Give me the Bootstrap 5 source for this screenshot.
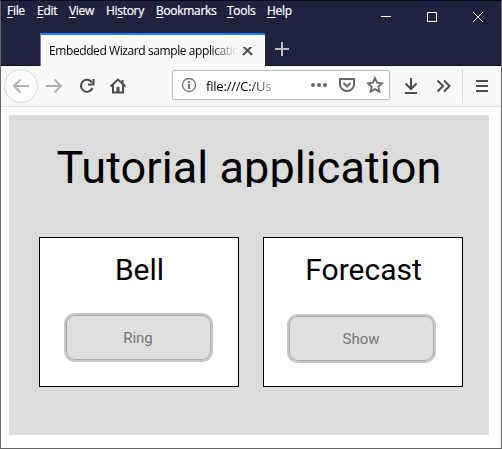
<!DOCTYPE html>
<html lang="en">
<head>
<meta charset="utf-8">
<title>Embedded Wizard sample application</title>
<link href="https://cdn.jsdelivr.net/npm/bootstrap@5.3.0/dist/css/bootstrap.min.css" rel="stylesheet">
<style>
body{font-family:"Open Sans","Noto Sans",sans-serif;font-size:12px;line-height:16px;color:#000}
.window{width:502px;height:449px;border:1px solid #666;border-top-color:#0a0b18;background:#fff}
.titlebar{height:65px;background:#202340;border-bottom:1px solid #100f28}
.menus{height:32px;padding:2px 0 0 6px;color:#fff}
.menus span{font-size:12px;white-space:nowrap;letter-spacing:-.3px;-webkit-text-stroke:.2px #fff}
.menus u{text-underline-offset:2px}
.w30{width:30px}.w32{width:32px}.w37{width:37px}.w50{width:50px}.w71{width:71px}.w40{width:40px}
.controls{margin-left:84px;margin-top:8px}
.tab-active{width:225px;height:33px;margin-left:39px;background:#f9f9fa;border-top:2px solid #0a84ff;padding:8px 0 0 8px;border-left:1px solid #777b9a}
.tab-text{width:189px;white-space:nowrap;font-size:12px;letter-spacing:-.41px;-webkit-mask-image:linear-gradient(90deg,#000 162px,transparent 189px);mask-image:linear-gradient(90deg,#000 162px,transparent 189px)}
.toolbar{height:41px;background:#f9f9fa;border-bottom:1px solid #ddd}
.address{width:218px;height:30px;margin-left:44px;background:#fff;border:1px solid #bbb;border-radius:2px;box-shadow:0 1px 3px #0001}
.url{width:69px;padding:2px 0 0 1px;white-space:nowrap;font-size:13px;letter-spacing:-.2px;-webkit-mask-image:linear-gradient(90deg,#000 46px,transparent 78px);mask-image:linear-gradient(90deg,#000 46px,transparent 78px)}
svg{display:block;flex:none;fill:none;stroke:#4c4c4c;stroke-width:2}
.stage{width:480px;height:320px;margin:8px 0 0 8px;background:#dcdcdc;font-family:Roboto,sans-serif}
.heading{height:72px;overflow:hidden;font-size:45px;line-height:53px;letter-spacing:.08px;padding-top:26px;white-space:nowrap}
.panels{padding:50px 26px 0 30px;gap:24px}
.panel{width:200px;height:150px;border:1px solid #000;background:#fff}
.panel-title{font-size:30px;line-height:36px;padding-top:14px;padding-left:1px}
.action{width:149px;height:49px;padding:0;color:#757575;background:#dfdfdf;border:2px solid #c8c8c8;border-radius:11px;box-shadow:inset 0 0 0 1px #aaa;font-size:15px;line-height:18px}
.action:hover{color:#757575;background:#dfdfdf;border-color:#c8c8c8}
.action-ring{margin:25px 0 0 23.5px}.action-show{margin:26px 0 0 22.5px}
</style>
<script src="https://cdn.jsdelivr.net/npm/bootstrap@5.3.0/dist/js/bootstrap.bundle.min.js"></script>
</head>
<body class="overflow-hidden">
<div class="window overflow-hidden">
  <header class="titlebar">
    <div class="menus d-flex">
      <span class="w30"><u>F</u>ile</span><span class="w32"><u>E</u>dit</span><span class="w37"><u>V</u>iew</span><span class="w50">Hi<u>s</u>tory</span><span class="w71"><u>B</u>ookmarks</span><span class="w40"><u>T</u>ools</span><span class="w30"><u>H</u>elp</span>
      <svg class="controls" width="104" height="14" style="stroke:#fff;stroke-width:1"><path d="M0 5.500H10M46.500 1.500h9v9h-9zM92 1l10 10M102 1l-10 10"/></svg>
    </div>
    <div class="d-flex">
      <div class="tab-active d-flex"><div class="tab-text">Embedded Wizard sample applicatio</div>
        <svg class="mt-1" width="18" height="14"><path d="M5 -1l9 9M14 -1l-9 9"/></svg></div>
      <svg width="36" height="33" style="stroke:#bcbdc9"><path d="M10 16H24M17 9v14"/></svg>
    </div>
  </header>
  <nav class="toolbar d-flex align-items-start">
    <svg width="127" height="40">
      <circle cx="20" cy="20" r="16.500" fill="#fcfcfc" stroke="#d7d7d9" stroke-width="1"/>
      <path stroke="#b1b1b2" d="M28 20H13M19.500 13.500L13 20l6.500 6.500M45 20H60M53.500 13.500L60 20l-6.500 6.500"/>
      <path d="M91 16.500A6 6 0 1 0 91.500 22M92.500 13v5.500H87" />
      <path d="M109.500 20.500L117 13.500l7.500 7M112 19v7.500h10V19M121.500 14v3"/>
      <path d="M115.500 21h3v5h-3z" fill="#4c4c4c" stroke="none"/>
    </svg>
    <div class="address d-flex align-items-center mt-1">
      <svg width="32" height="28"><circle cx="16" cy="14" r="6.500" stroke="#737373" stroke-width="1.300"/><path stroke="#737373" d="M16 13v5M16 10v2"/></svg>
      <div class="url">file:///C:/Us</div>
      <svg width="115" height="28" style="stroke:#666">
        <g fill="#666" stroke="none"><circle cx="39" cy="14" r="2"/><circle cx="45" cy="14" r="2"/><circle cx="51" cy="14" r="2"/></g>
        <path d="M66 8h14v5.500a7 6.500 0 0 1-14 0zM69.500 12l3.500 3.500 3.500-3.500"/>
        <path stroke-width="1.800" d="M101 7.200l2.100 4.500 4.900.6-3.600 3.300.9 4.900-4.300-2.400-4.300 2.400.9-4.900-3.600-3.300 4.900-.6z"/>
      </svg>
    </div>
    <svg width="110" height="40">
      <path d="M21 12v11M15.500 17.500L21 23l5.500-5.500M15 27h12M47.500 14.500L53 20l-5.500 5.500M54 14.500l5.500 5.500-5.500 5.500M86 15h12M86 20h12M86 25h12"/>
      <path stroke="#d5d5d7" stroke-width="1" d="M72.500 3v34"/>
    </svg>
  </nav>
  <main class="stage">
    <div class="heading text-center">Tutorial application</div>
    <div class="panels d-flex">
      <section class="panel"><div class="panel-title text-center">Bell</div><button class="btn action action-ring">Ring</button></section>
      <section class="panel"><div class="panel-title text-center">Forecast</div><button class="btn action action-show">Show</button></section>
    </div>
  </main>
</div>
</body>
</html>
